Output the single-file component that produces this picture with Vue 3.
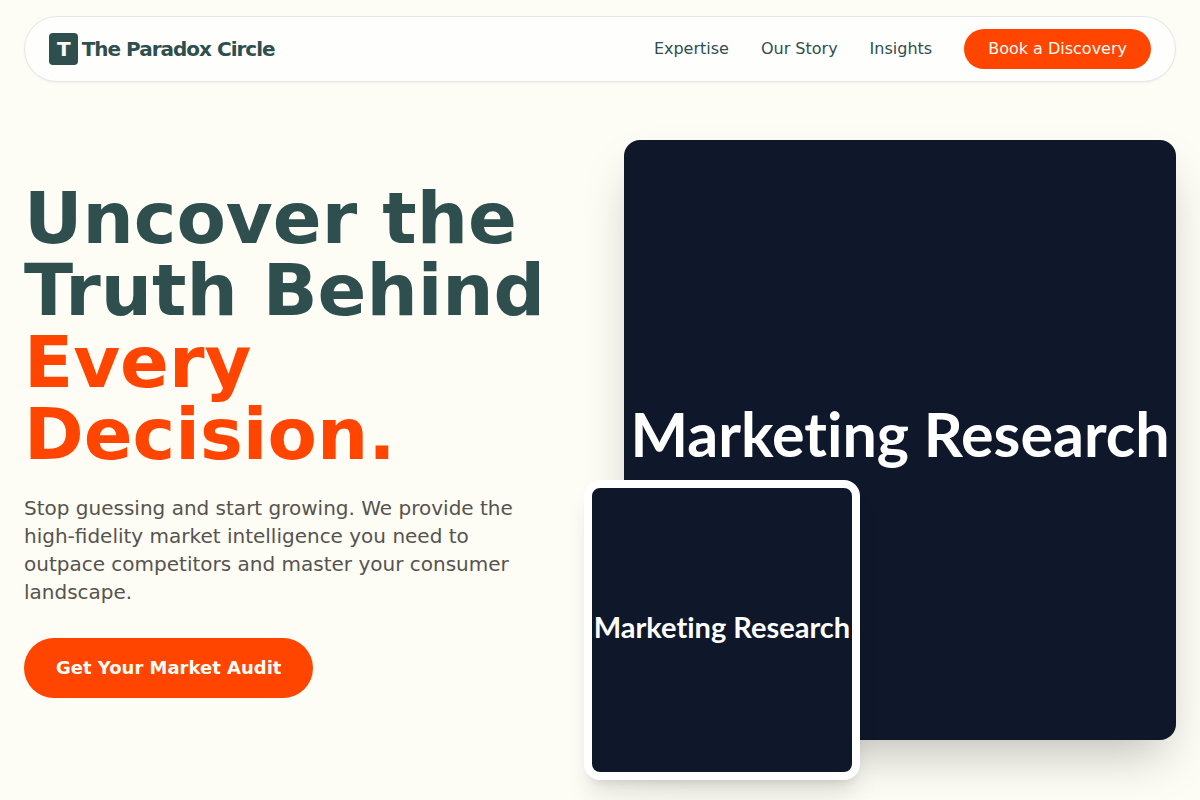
<script setup>
const links = ['Expertise', 'Our Story', 'Insights']
</script>

<template>
  <div class="page">
    <header class="bar">
      <a class="brand" href="#"><span class="mark">T</span><span>The Paradox Circle</span></a>
      <nav class="nav">
        <a v-for="link in links" :key="link" href="#">{{ link }}</a>
        <button class="book" type="button">Book a Discovery</button>
      </nav>
    </header>
    <main class="hero">
      <section class="copy">
        <h1>Uncover the Truth Behind <span>Every Decision.</span></h1>
        <p>Stop guessing and start growing. We provide the high-fidelity market intelligence you need to outpace competitors and master your consumer landscape.</p>
        <button class="audit" type="button">Get Your Market Audit</button>
      </section>
      <section class="visual">
        <div class="large">Marketing Research</div>
        <div class="small">Marketing Research</div>
      </section>
    </main>
  </div>
</template>

<style>
body {
  margin: 0;
  background: #fdfcf5;
}
</style>

<style scoped>
.page {
  box-sizing: border-box;
  min-height: 100vh;
  padding: 16px 24px 20px;
  overflow: hidden;
  background: #fdfcf5;
  color: #2f4f4f;
  font-family: "DejaVu Sans", sans-serif;
  font-size: 16px;
  line-height: 24px;
}
.page * {
  box-sizing: border-box;
}
button {
  border: 0;
  border-radius: 999px;
  background: #ff4500;
  color: #fdfcf5;
  font-family: inherit;
  cursor: pointer;
}
a {
  color: inherit;
  text-decoration: none;
}
.bar {
  display: flex;
  align-items: center;
  justify-content: space-between;
  padding: 12px 24px;
  border: 1px solid #e5e7eb;
  border-radius: 999px;
  background: #fefefd;
  box-shadow: 0 1px 2px rgba(0, 0, 0, 0.05);
}
.brand {
  display: flex;
  align-items: center;
  gap: 4px;
  font-size: 20px;
  font-weight: 700;
  letter-spacing: -1px;
  line-height: 28px;
}
.mark {
  padding: 2px 8px;
  border-radius: 4px;
  background: #2f4f4f;
  color: #fdfcf5;
}
.nav {
  display: flex;
  align-items: center;
  gap: 32px;
}
.book {
  padding: 8px 24px;
  font-size: 16px;
  line-height: 24px;
}
.hero {
  display: grid;
  grid-template-columns: 1fr 1fr;
  align-items: center;
  gap: 48px;
  margin-top: 58px;
}
h1 {
  margin: 0 0 24px;
  font-size: 72px;
  font-weight: 700;
  line-height: 72px;
}
h1 span {
  color: #ff4500;
}
p {
  max-width: 512px;
  margin: 0 0 32px;
  color: #57534e;
  font-size: 20px;
  line-height: 28px;
}
.audit {
  padding: 16px 32px;
  font-size: 18px;
  font-weight: 700;
  line-height: 28px;
}
.visual {
  position: relative;
}
.large,
.small {
  display: flex;
  align-items: center;
  justify-content: center;
  background: #0f172a;
  color: #fff;
  font-family: Lato, sans-serif;
  font-weight: 700;
  font-variant-ligatures: none;
  white-space: nowrap;
}
.large {
  height: 600px;
  padding-bottom: 12px;
  border-radius: 16px;
  box-shadow: 0 25px 50px -12px rgba(0, 0, 0, 0.25);
  font-size: 61px;
}
.small {
  position: absolute;
  bottom: -40px;
  left: -40px;
  width: 50%;
  height: 300px;
  padding-bottom: 6px;
  border: 8px solid #fff;
  border-radius: 16px;
  box-shadow: 0 20px 25px -5px rgba(0, 0, 0, 0.1), 0 8px 10px -6px rgba(0, 0, 0, 0.1);
  font-size: 29px;
}
</style>
